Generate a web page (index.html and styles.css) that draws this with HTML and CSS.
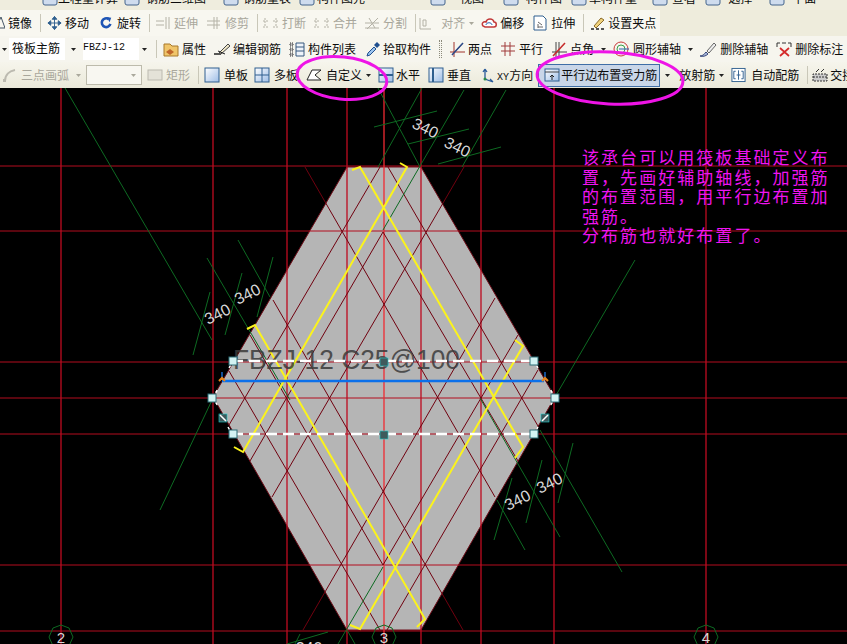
FILE: index.html
```html
<!DOCTYPE html>
<html lang="zh">
<head>
<meta charset="utf-8">
<title>筏板钢筋布置</title>
<link rel="stylesheet" href="styles.css">
</head>
<body>
<svg class="sprite" width="0" height="0" aria-hidden="true">
  <defs>
    <linearGradient id="pane" x1="0" y1="0" x2="1" y2="1"><stop offset="0" stop-color="#ffffff"/><stop offset="1" stop-color="#9dbde6"/></linearGradient>
  </defs>
  <symbol id="caret" viewBox="0 0 7 16"><path d="M1 7h5l-2.500 3z" fill="#222"/></symbol>
  <symbol id="caretg" viewBox="0 0 7 16"><path d="M1 7h5l-2.500 3z" fill="#aaa89c"/></symbol>
  <symbol id="mirror" viewBox="0 0 8 16"><path d="M4 2L8 13H-1z" fill="none" stroke="#456" stroke-width="1"/></symbol>
  <symbol id="move" viewBox="0 0 16 16"><path d="M8 1v14M1 8h14M8 1L5.500 4h5zM8 15l-2.500-3h5zM1 8l3-2.500v5zM15 8l-3-2.500v5z" fill="#2f5f8f" stroke="#2f5f8f" stroke-width="1"/></symbol>
  <symbol id="rotate" viewBox="0 0 16 16"><path d="M11 3.500A5 5 0 1 0 13 9" fill="none" stroke="#1f55b5" stroke-width="3"/><path d="M9 1l5 1-2 5z" fill="#1f55b5"/></symbol>
  <symbol id="extend" viewBox="0 0 16 16"><path d="M1 6h8M1 10h8M11 2v12M14 2v12" fill="none" stroke="#b4b2a6"/></symbol>
  <symbol id="trim" viewBox="0 0 16 16"><path d="M1 6h13M1 10h13M8 2v12M11 2v12" fill="none" stroke="#b4b2a6"/></symbol>
  <symbol id="brk" viewBox="0 0 18 16"><path d="M1 6h6M1 12h6M11 6h6M11 12h6M3 3v9M14 3v9" fill="none" stroke="#b4b2a6" stroke-dasharray="2 1"/></symbol>
  <symbol id="split" viewBox="0 0 16 16"><path d="M1 13h14M1 8h14M3 14L14 3M5 3l6 10" fill="none" stroke="#b4b2a6"/></symbol>
  <symbol id="align" viewBox="0 0 16 16"><path d="M2 3v11h11M5 5h3v6H5z" fill="none" stroke="#b4b2a6"/></symbol>
  <symbol id="offset" viewBox="0 0 16 16"><path d="M2 11c-2-3 1-5 3-4 1-4 7-4 8 0 3 0 3 5 0 5H4z" fill="#fff" stroke="#c23a3a" stroke-width="1.500"/><path d="M5 10c0-3 6-3 6 0" fill="none" stroke="#2a62b0"/></symbol>
  <symbol id="stretch" viewBox="0 0 16 16"><path d="M2 1h9l3 3v11H2z" fill="#fff" stroke="#2f5f8f"/><path d="M6 7l4 3M6 12h5M6 9v4" stroke="#666" fill="none"/></symbol>
  <symbol id="grip" viewBox="0 0 16 16"><path d="M1 14h3M6 14h3M11 14h3" stroke="#222" stroke-width="1.500"/><path d="M4 11L11 3l3 2-8 8z" fill="#f1d27a" stroke="#8a6a2a"/></symbol>
  <symbol id="prop" viewBox="0 0 16 16"><path d="M1 3h6l2 2h6v10H1z" fill="#f0c56a" stroke="#a8792a"/><path d="M3 11l4-3 4 3-4 3z" fill="#c0662a"/></symbol>
  <symbol id="editbar" viewBox="0 0 18 16"><path d="M1 13h7" stroke="#222" stroke-width="1.500"/><path d="M6 12L15 3l2 2-9 8z" fill="#efe7c8" stroke="#444"/><path d="M5 10l7 3" stroke="#222"/></symbol>
  <symbol id="list" viewBox="0 0 16 16"><path d="M1 2h3v3H1zM1 7h3v3H1zM1 12h3v3H1z" fill="#bbb" stroke="#333" stroke-dasharray="1 1"/><path d="M7 2h8v13H7zM7 6h8M7 10h8" fill="#eef3fa" stroke="#36587f"/></symbol>
  <symbol id="pick" viewBox="0 0 16 16"><path d="M2 15l1-3 6-6 2 2-6 6z" fill="#9cc4ee" stroke="#1f4f8f"/><path d="M9 4l3-3 3 3-3 3z" fill="#1f4f8f"/></symbol>
  <symbol id="twopt" viewBox="0 0 16 16"><path d="M1 11h15M5 1v15M3 14L14 2" fill="none" stroke="#a0332a" stroke-width="1"/><path d="M3 14L14 2" stroke="#2a4a8a" stroke-width="1.500"/></symbol>
  <symbol id="par" viewBox="0 0 16 16"><path d="M1 5h14M1 10h14M5 1v14M10 1v14" fill="none" stroke="#a03a3a"/></symbol>
  <symbol id="ang" viewBox="0 0 16 16"><path d="M1 11h15M5 1v15M8 1v15" fill="none" stroke="#444"/><path d="M2 15L14 2" stroke="#c62a2a" stroke-width="1.500"/></symbol>
  <symbol id="circ" viewBox="0 0 16 16"><circle cx="8" cy="8" r="7" fill="none" stroke="#c93a3a"/><circle cx="8" cy="8" r="4" fill="none" stroke="#3aa04a"/><path d="M6 8h10" stroke="#2a62b0"/></symbol>
  <symbol id="deaxis" viewBox="0 0 18 16"><path d="M1 15c3 0 4-2 6-4l2 2c-2 2-5 3-8 2z" fill="#a6b4d8" stroke="#3a4a7a"/><path d="M8 10l7-8 2 2-7 8z" fill="#eee" stroke="#666"/></symbol>
  <symbol id="delabel" viewBox="0 0 16 16"><path d="M1 6V2h3M15 6V2h-3M6 2h4" fill="none" stroke="#333"/><path d="M4 7l9 8M13 7l-9 8" stroke="#d42a2a" stroke-width="1.700"/></symbol>
  <symbol id="arc" viewBox="0 0 16 16"><path d="M3 14C3 8 7 4 13 3" fill="none" stroke="#bcbab0" stroke-width="2"/><rect x="1" y="12" width="3" height="3" fill="#bcbab0"/></symbol>
  <symbol id="rect" viewBox="0 0 16 16"><rect x="1" y="3" width="14" height="10" fill="#e4e2d8" stroke="#bcbab0"/></symbol>
  <symbol id="single" viewBox="0 0 16 16"><rect x="1" y="1" width="14" height="14" fill="url(#pane)" stroke="#2f5f8f"/></symbol>
  <symbol id="multi" viewBox="0 0 16 16"><rect x="1" y="1" width="14" height="14" fill="url(#pane)" stroke="#2f5f8f"/><path d="M8 1v14M1 8h14" stroke="#2f5f8f"/></symbol>
  <symbol id="custom" viewBox="0 0 16 16"><path d="M1 13L6 3h9L9 8l6 5z" fill="#fff" stroke="#222"/></symbol>
  <symbol id="hor" viewBox="0 0 16 16"><rect x="1" y="1" width="14" height="14" fill="url(#pane)" stroke="#2f5f8f"/><path d="M1 8h14" stroke="#2f5f8f" stroke-width="2"/></symbol>
  <symbol id="ver" viewBox="0 0 16 16"><rect x="1" y="1" width="14" height="14" fill="url(#pane)" stroke="#2f5f8f"/><path d="M5 1v14" stroke="#2f5f8f" stroke-width="2"/></symbol>
  <symbol id="xy" viewBox="0 0 16 16"><path d="M6 2v10l8 3M6 2L4 5M6 2l2 3M14 15l-3-3" fill="none" stroke="#2a5a9a" stroke-width="1.300"/><circle cx="6" cy="12" r="1.500" fill="#2a8a4a"/></symbol>
  <symbol id="paredge" viewBox="0 0 16 16"><rect x="1" y="2" width="14" height="12" fill="url(#pane)" stroke="#2f5f8f"/><path d="M1 5h14" stroke="#444"/><path d="M8 13V8M6 10l2-2 2 2" stroke="#222" fill="none"/></symbol>
  <symbol id="auto" viewBox="0 0 16 16"><rect x="1" y="1" width="14" height="14" fill="#fff" stroke="#2f5f8f"/><path d="M5 4H3v8h2M11 4h2v8h-2M8 3v10M6 8h4" fill="none" stroke="#2f5f8f"/></symbol>
  <symbol id="cross" viewBox="0 0 16 16"><path d="M1 14V7h14v7zM1 10h14" fill="#ccc" stroke="#333" stroke-dasharray="2 1"/><path d="M4 5l3-3M9 5l3-3" stroke="#333"/></symbol>
  <symbol id="top" viewBox="0 0 16 16"><rect x="1" y="1" width="14" height="14" rx="2" fill="#cfdcee" stroke="#44648c"/></symbol>
</svg>

<div class="app">
  <header class="toolbar">
    <div class="row row-top">
      <svg class="ic" width="58" height="16"><use href="#top" x="42" width="16" height="16"/></svg><span>工程量计算</span>
      <svg class="ic" width="28" height="16"><use href="#top" x="6" width="16" height="16"/></svg><span>钢筋三维图</span>
      <svg class="ic" width="37" height="16"><use href="#top" x="17" width="16" height="16"/></svg><span>钢筋量表</span>
      <svg class="ic" width="26" height="16"><use href="#top" x="8" width="16" height="16"/></svg><span>构件图元</span>
      <svg class="ic" width="95" height="16"><use href="#top" x="64" width="18" height="16"/></svg><span>视图</span>
      <svg class="ic" width="42" height="16"><use href="#top" x="19" width="16" height="16"/></svg><span>构件图</span>
      <svg class="ic" width="27" height="16"><use href="#top" x="9" width="16" height="16"/></svg><span>单构件量</span>
      <svg class="ic" width="35" height="16"><use href="#top" x="15" width="16" height="16"/></svg><span>查看</span>
      <svg class="ic" width="32" height="16"><use href="#top" x="9" width="16" height="16"/></svg><span>选择</span>
      <svg class="ic" width="40" height="16"><use href="#top" x="17" width="16" height="16"/></svg><span>平面</span>
    </div>

    <div class="row row-edit">
      <svg class="ic" width="8" height="16"><use href="#mirror" x="-3" width="8" height="16"/></svg><span>镜像</span>
      <i class="sep"></i>
      <svg class="ic" width="24" height="16"><use href="#move" x="6" width="15" height="16"/></svg><span>移动</span>
      <svg class="ic" width="28" height="16"><use href="#rotate" x="10" width="14" height="16"/></svg><span>旋转</span>
      <i class="sep"></i>
      <svg class="ic" width="24" height="16"><use href="#extend" x="5" width="16" height="16"/></svg><span class="off">延伸</span>
      <svg class="ic" width="27" height="16"><use href="#trim" x="8" width="16" height="16"/></svg><span class="off">修剪</span>
      <i class="sep"></i>
      <svg class="ic" width="24" height="16"><use href="#brk" x="4" width="18" height="16"/></svg><span class="off">打断</span>
      <svg class="ic" width="27" height="16"><use href="#brk" x="7" width="18" height="16"/></svg><span class="off">合并</span>
      <svg class="ic" width="26" height="16"><use href="#split" x="7" width="16" height="16"/></svg><span class="off">分割</span>
      <i class="sep"></i>
      <svg class="ic" width="25" height="16"><use href="#align" x="2" width="16" height="16"/></svg><span class="off">对齐</span>
      <svg class="ic" width="35" height="16"><use href="#caretg" x="3" width="7" height="16"/><use href="#offset" x="16" width="16" height="16"/></svg><span>偏移</span>
      <svg class="ic" width="27" height="16"><use href="#stretch" x="8" width="16" height="16"/></svg><span>拉伸</span>
      <i class="sep"></i>
      <svg class="ic" width="24" height="16"><use href="#grip" x="6" width="16" height="16"/></svg><span>设置夹点</span>
    </div>

    <div class="row row-draw">
      <svg class="ic" width="9" height="16"><use href="#caret" x="1" width="7" height="16"/></svg>
      <span class="field">筏板主筋</span>
      <svg class="ic" width="18" height="16"><use href="#caret" x="5" width="7" height="16"/></svg>
      <span class="field field-code">FBZJ-12</span>
      <svg class="ic" width="9" height="16"><use href="#caret" x="2" width="7" height="16"/></svg>
      <i class="sep"></i>
      <svg class="ic" width="25" height="16"><use href="#prop" x="6" width="16" height="16"/></svg><span>属性</span>
      <svg class="ic" width="27" height="16"><use href="#editbar" x="7" width="18" height="16"/></svg><span>编辑钢筋</span>
      <svg class="ic" width="27" height="16"><use href="#list" x="8" width="16" height="16"/></svg><span>构件列表</span>
      <svg class="ic" width="27" height="16"><use href="#pick" x="9" width="16" height="16"/></svg><span>拾取构件</span>
      <i class="sep sep-grip"></i>
      <svg class="ic" width="26" height="16"><use href="#twopt" x="7" width="16" height="16"/></svg><span>两点</span>
      <svg class="ic" width="27" height="16"><use href="#par" x="8" width="16" height="16"/></svg><span>平行</span>
      <svg class="ic" width="27" height="16"><use href="#ang" x="8" width="16" height="16"/></svg><span>点角</span>
      <svg class="ic" width="39" height="16"><use href="#caret" x="6" width="7" height="16"/><use href="#circ" x="19" width="16" height="16"/></svg><span>圆形辅轴</span>
      <svg class="ic" width="39" height="16"><use href="#caret" x="6" width="7" height="16"/><use href="#deaxis" x="18" width="18" height="16"/></svg><span>删除辅轴</span>
      <svg class="ic" width="27" height="16"><use href="#delabel" x="8" width="16" height="16"/></svg><span>删除标注</span>
    </div>

    <div class="row row-rebar">
      <svg class="ic" width="21" height="16"><use href="#arc" x="2" width="16" height="16"/></svg><span class="off">三点画弧</span>
      <svg class="ic" width="17" height="16"><use href="#caretg" x="6" width="7" height="16"/></svg>
      <span class="select"><svg class="ic" width="7" height="16"><use href="#caretg" width="7" height="16"/></svg></span>
      <svg class="ic" width="24" height="16"><use href="#rect" x="5" width="16" height="16"/></svg><span class="off">矩形</span>
      <i class="sep"></i>
      <svg class="ic" width="25" height="16"><use href="#single" x="5" width="16" height="16"/></svg><span>单板</span>
      <svg class="ic" width="26" height="16"><use href="#multi" x="6" width="16" height="16"/></svg><span>多板</span>
      <svg class="ic" width="28" height="16"><use href="#custom" x="8" width="16" height="16"/></svg><span>自定义</span>
      <svg class="ic" width="34" height="16"><use href="#caret" x="3" width="7" height="16"/><use href="#hor" x="16" width="16" height="16"/></svg><span>水平</span>
      <svg class="ic" width="27" height="16"><use href="#ver" x="8" width="16" height="16"/></svg><span>垂直</span>
      <svg class="ic" width="26" height="16"><use href="#xy" x="8" width="16" height="16"/></svg><span><b class="latin">XY</b>方向</span>
      <button class="active" type="button"><svg class="ic" width="17" height="16"><use href="#paredge" width="16" height="16"/></svg><span>平行边布置受力筋</span></button>
      <svg class="ic" width="19" height="16"><use href="#caret" x="4" width="7" height="16"/></svg><span>放射筋</span>
      <svg class="ic" width="36" height="16"><use href="#caret" x="3" width="7" height="16"/><use href="#auto" x="16" width="15" height="16"/></svg><span>自动配筋</span>
      <i class="sep"></i>
      <svg class="ic" width="22" height="16"><use href="#cross" x="4" width="16" height="16"/></svg><span>交接</span>
    </div>
  </header>

  <main class="canvas">
    <svg class="drawing" viewBox="0 88 847 556" width="847" height="556">
      <path class="slab" d="M347 167H421L555 397L421 630H347L213 397Z"/>

      <path class="axis" d="M0 166H847M0 231H847M0 362H847M0 398H847M0 434H847M0 565H847M0 631H847"/>
      <path class="grid" d="M61 88V644M213 88V644M287 88V644M347 88V644M421 88V644M481 88V644M554 88V644M706 88V644"/>
      <path class="grid-center" d="M384 88V644"/>

      <path class="lattice" d="M380 167L229 425M383 232L250 461M464 167L272 497M495 298L303 630M518 335L383 565M538 370L387 630
                               M388 167L538 426M383 232L518 461M305 167L495 497M273 300L463 630M250 335L383 565M229 371L380 630"/>

      <path class="aux" d="M65 88L212 340M207 258L290 400M238 240L270 297M160 510L213 398M210 292L193 355M242 273L225 335M273 257L257 317
                           M378 88L420 167M422 88L378 167M464 90L383 230M506 90L462 167M374 127L437 111M408 144L469 129M438 164L501 147
                           M480 398L560 537M540 430L622 572M497 500L525 550M512 478L494 540M542 460L526 523M573 443L558 503M555 397L635 260
                           M383 567L338 644M347 630L355 644M328 632L287 644M300 634L295 644"/>
      <path class="aux" d="M61 625L69 628L73 637L69 646M61 625L53 628L49 637L53 646M384 625L392 628L396 637L392 646M384 625L376 628L372 637L376 646M706 625L714 628L718 637L714 646M706 625L698 628L694 637L698 646"/>

      <path class="rebar" d="M352 170L360 167L523 447L515 458M400 163L407 167L243 452L234 447M247 329L255 325L425 619L417 627M515 340L523 346L360 629L350 625"/>

      <text class="label" x="233" y="369" textLength="227" lengthAdjust="spacingAndGlyphs">FBZJ-12 C25@100</text>

      <path class="selected" d="M232 361H534M232 434H534"/>
      <path class="main-bar" d="M222 381H544"/>
      <path class="tick" d="M222 372V379M545 372V379"/>
      <path class="hook" d="M219 381l3-3l3 3M542 381l3-3l3 3"/>
      <path class="edge-mark" d="M233 361L229 368M213 397L218 389M213 398L218 406M228 427L232 434M534 361L538 368M555 397L550 389M555 398L550 406M538 427L534 434"/>

      <g class="handle-light">
        <rect x="229" y="357" width="8" height="8"/><rect x="530" y="357" width="8" height="8"/>
        <rect x="208" y="394" width="8" height="8"/><rect x="551" y="394" width="8" height="8"/>
        <rect x="229" y="430" width="8" height="8"/><rect x="530" y="430" width="8" height="8"/>
      </g>
      <g class="handle-dark">
        <rect x="380" y="358" width="8" height="8"/><rect x="380" y="431" width="8" height="8"/>
        <rect x="219" y="414" width="8" height="8"/><rect x="541" y="414" width="8" height="8"/>
      </g>
      <path class="handle-slash" d="M220 415L226 421M548 415L542 421"/>

      <g class="dim">
        <text transform="translate(423 133) rotate(26)">340</text>
        <text transform="translate(455 152) rotate(26)">340</text>
        <text transform="translate(220 319) rotate(-27)">340</text>
        <text transform="translate(250 299) rotate(-27)">340</text>
        <text transform="translate(520 505) rotate(-27)">340</text>
        <text transform="translate(552 488) rotate(-27)">340</text>
        <text x="309" y="654">340</text>
        <text class="bubble" x="61" y="643">2</text>
        <text class="bubble" x="384" y="643">3</text>
        <text class="bubble" x="706" y="643">4</text>
      </g>
    </svg>

    <p class="note">该承台可以用筏板基础定义布<br>置，先画好辅助轴线，加强筋<br>的布置范围，用平行边布置加<br>强筋。<br>分布筋也就好布置了。</p>
  </main>

  <svg class="marks" width="847" height="644" aria-hidden="true">
    <ellipse cx="342" cy="78" rx="45" ry="21" transform="rotate(6 342 78)"/>
    <ellipse cx="610" cy="78" rx="73" ry="26" transform="rotate(3 610 78)"/>
  </svg>
</div>
</body>
</html>
```

FILE: styles.css
```css
* { box-sizing: border-box; }

html, body {
  margin: 0;
  height: 100%;
  background: #000;
  overflow: hidden;
}

.sprite { position: absolute; }

.app {
  position: relative;
  width: 847px;
  height: 644px;
  display: flex;
  flex-direction: column;
  overflow: hidden;
  font-family: "Noto Sans CJK SC", "Liberation Sans", sans-serif;
}

/* Toolbars */
.toolbar {
  flex: none;
  height: 88px;
  background: #f3f1e6;
  color: #0c0c0c;
  font-size: 12px;
}

.row {
  display: flex;
  align-items: center;
  height: 26px;
  white-space: nowrap;
  overflow: hidden;
  line-height: 16px;
}

.row span { flex: none; }

.row-top {
  height: 10px;
  background: #efedde;
  align-items: flex-start;
}
.row-top > * { margin-top: -10px; }

.row-edit { background: linear-gradient(90deg, #f8f7f0 0, #f8f7f0 660px, #eeecdc 660px); }
.row-draw { background: #f6f5ee; }
.row-rebar { background: linear-gradient(#f6f5ec, #ebe9da); }

.ic { flex: none; display: block; }

.off { color: #a9a79c; }

.latin {
  font: 10px "Liberation Mono", monospace;
}

.sep {
  flex: none;
  width: 1px;
  height: 18px;
  margin-left: 8px;
  background: #c9c7b8;
}

.sep-grip {
  width: 3px;
  background: none;
  border-left: 1px dotted #8d8b7c;
  border-right: 1px dotted #8d8b7c;
}

.field {
  display: block;
  width: 56px;
  height: 22px;
  padding-left: 3px;
  line-height: 20px;
  background: #fff;
}

.field-code {
  padding-left: 0;
  font: 10px/20px "Liberation Mono", monospace;
}

.select {
  display: flex;
  justify-content: flex-end;
  align-items: center;
  width: 56px;
  height: 20px;
  padding-right: 4px;
  background: #f8f7f1;
  border: 1px solid #bdbbac;
}

.active {
  flex: none;
  display: flex;
  align-items: center;
  width: 122px;
  height: 23px;
  margin: 0 0 0 5px;
  padding: 0 0 0 5px;
  background: #c9d6e8;
  border: 1px solid #3f6ea6;
  color: #0c0c0c;
  font: inherit;
  line-height: 16px;
}

/* Drawing canvas */
.canvas {
  position: relative;
  flex: 1;
  background: #000;
}

.drawing {
  display: block;
}

.drawing path { fill: none; }

.drawing .slab { fill: #b5b5b5; stroke: #6d0d18; stroke-width: 1; }
.axis { stroke: #b30c1e; stroke-width: 1; }
.grid { stroke: #bd0c20; stroke-width: 1.300; }
.grid-center { stroke: #f02a32; stroke-width: 1.300; }
.lattice { stroke: #70000f; stroke-width: 1; }
.aux { stroke: #0d6a22; stroke-width: 1; }
.rebar { stroke: #fbf31c; stroke-width: 2; }
.selected { stroke: #fff; stroke-width: 2.500; stroke-dasharray: 11 6; }
.main-bar { stroke: #0b70ea; stroke-width: 2.500; }
.tick { stroke: #1768c9; stroke-width: 1.500; }
.hook { stroke: #e8861c; stroke-width: 2; }
.edge-mark { stroke: #fff; stroke-width: 1.500; stroke-dasharray: 3 2; }
.handle-slash { stroke: #fff; stroke-width: 1.500; }

.label {
  font: 28px "Liberation Sans", sans-serif;
  fill: #3c3c3c;
  opacity: 0.85;
}

.handle-light rect { fill: #d3f3f3; stroke: #2d6f78; stroke-width: 1; }
.handle-dark rect { fill: #3f5a5c; stroke: #21d0d0; stroke-width: 0.600; }

.dim text {
  font: 16px "Liberation Sans", sans-serif;
  fill: #d8d8d8;
  text-anchor: middle;
}
.dim .bubble { font-size: 15px; }

.note {
  position: absolute;
  left: 582px;
  top: 59px;
  margin: 0;
  font-size: 17px;
  letter-spacing: 2.050px;
  line-height: 19.500px;
  color: #f014f0;
  white-space: nowrap;
}

/* Hand-drawn highlights over toolbar and canvas */
.marks {
  position: absolute;
  left: 0;
  top: 0;
  pointer-events: none;
}
.marks ellipse {
  fill: none;
  stroke: #ee14e6;
  stroke-width: 3;
}
```
